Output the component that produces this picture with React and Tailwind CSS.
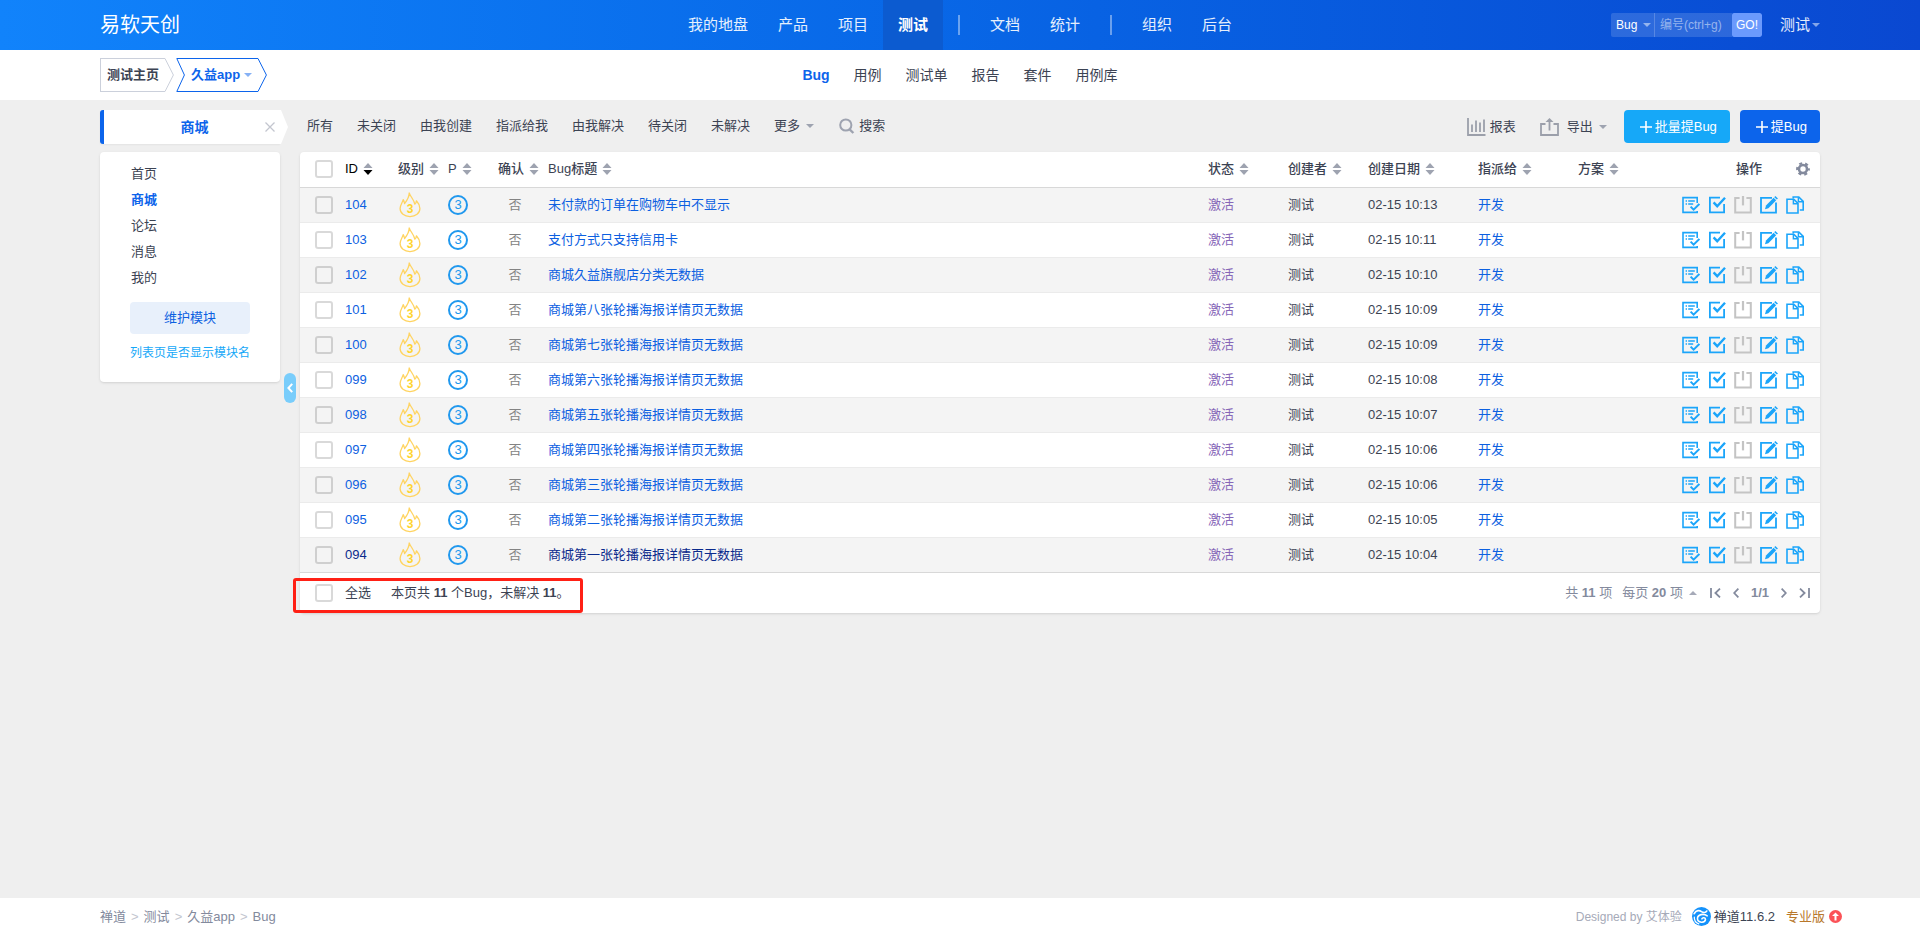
import React, { useState } from 'react';
import { clsx } from 'clsx';

const mainNav = [
  ['我的地盘', '产品', '项目', '测试'],
  ['文档', '统计'],
  ['组织', '后台'],
];

const subNav = ['Bug', '用例', '测试单', '报告', '套件', '用例库'];

const filters = ['所有', '未关闭', '由我创建', '指派给我', '由我解决', '待关闭', '未解决'];

const modules = ['首页', '商城', '论坛', '消息', '我的'];

const bugs = [
  { id: '104', title: '未付款的订单在购物车中不显示', date: '02-15 10:13' },
  { id: '103', title: '支付方式只支持信用卡', date: '02-15 10:11' },
  { id: '102', title: '商城久益旗舰店分类无数据', date: '02-15 10:10' },
  { id: '101', title: '商城第八张轮播海报详情页无数据', date: '02-15 10:09' },
  { id: '100', title: '商城第七张轮播海报详情页无数据', date: '02-15 10:09' },
  { id: '099', title: '商城第六张轮播海报详情页无数据', date: '02-15 10:08' },
  { id: '098', title: '商城第五张轮播海报详情页无数据', date: '02-15 10:07' },
  { id: '097', title: '商城第四张轮播海报详情页无数据', date: '02-15 10:06' },
  { id: '096', title: '商城第三张轮播海报详情页无数据', date: '02-15 10:06' },
  { id: '095', title: '商城第二张轮播海报详情页无数据', date: '02-15 10:05' },
  { id: '094', title: '商城第一张轮播海报详情页无数据', date: '02-15 10:04', visited: true },
];

const Caret = ({ up, className }) => (
  <svg width="8" height="4" viewBox="0 0 8 4" fill="currentColor" className={clsx('shrink-0', className)}>
    <path d={up ? 'M4 0L8 4H0z' : 'M0 0h8L4 4z'} />
  </svg>
);

const SortIcon = ({ active }) => (
  <svg width="10" height="12" viewBox="0 0 10 12" className="shrink-0">
    <path d="M5 0l4.500 5h-9z" fill="#9ea3b0" />
    <path d="M.5 7h9L5 12z" fill={active ? '#000' : '#9ea3b0'} />
  </svg>
);

const Checkbox = ({ label, ...props }) => (
  <input
    type="checkbox"
    aria-label={label}
    className="block w-[18px] h-[18px] shrink-0 appearance-none rounded-[3px] border-2 border-black/15 checked:bg-[#0c64eb]"
    {...props}
  />
);

// Severity flame
const Flame = () => (
  <svg width="22" height="26" viewBox="0 0 22 26" fill="none" stroke="#ffd461" strokeWidth="1.3" strokeLinejoin="round">
    <path d="M10.200 1C11.600 5 15 7.400 15.800 12.200C17 11.400 17.400 10.400 17.400 8.800C19.800 11.400 20.900 14 20.900 16.400C20.900 21.200 16.600 24.600 11 24.600C5.400 24.600 1.100 21.200 1.100 16.400C1.100 13 3.400 10.800 4.200 7.600C5 9 5.400 10.200 5.600 11.600C7.600 9 10.200 5.600 10.200 1Z" />
    <text x="11" y="21" textAnchor="middle" fontSize="12" fontWeight="bold" fill="#ffd42e" stroke="none" fontFamily="Liberation Sans, sans-serif">3</text>
  </svg>
);

const ConfirmIcon = () => (
  <svg width="18" height="18" viewBox="0 0 18 18" fill="none" stroke="currentColor" strokeWidth="1.6">
    <path d="M15.200 7V1.600H1v14.800h14.200v-1.400" />
    <path d="M3.600 5h1.400M6.200 5h6.600M3.600 8h1.400M6.200 8h5" strokeWidth="1.3" />
    <path d="M8.600 10.600l3 3L17.400 8" strokeWidth="2" />
  </svg>
);

const ResolveIcon = () => (
  <svg width="18" height="18" viewBox="0 0 18 18" fill="none" stroke="currentColor" strokeWidth="1.8">
    <path d="M12 1.700H1.900v14.600h14.200V8" />
    <path d="M5.600 6.400l3.600 3.800L17 1.800" strokeWidth="2.4" />
  </svg>
);

const CloseIcon = () => (
  <svg width="18" height="18" viewBox="0 0 18 18" fill="none" stroke="#c4c4c4" strokeWidth="2">
    <path d="M5.600 2H1.200v14.600h15.600V2h-4.400" />
    <path d="M9 0v9.400" strokeWidth="2.2" />
  </svg>
);

const EditIcon = () => (
  <svg width="18" height="18" viewBox="0 0 18 18" fill="none" stroke="currentColor" strokeWidth="1.8">
    <path d="M12 1.800H1v14.900h15V6.400" />
    <path d="M5 13.200l1-3.600L13.600 1.800 16.200 4.200 8.400 12.200z" fill="currentColor" stroke="none" />
    <path d="M14.800.6L17.400 3" strokeWidth="1.6" />
  </svg>
);

const CopyIcon = () => (
  <svg width="18" height="18" viewBox="0 0 18 18" fill="none" stroke="currentColor" strokeWidth="1.6">
    <path d="M1 3.200h6.800L12 7.400v9.600H1z" />
    <path d="M7.400 3.400v4.400H12" strokeWidth="1.5" />
    <path d="M7.200 2.600V1h5.600l4.400 4.400v8.600h-3.400" />
    <path d="M12.400 1.200v4.600h4.600" strokeWidth="1.5" />
  </svg>
);

const PlusIcon = () => (
  <svg width="12" height="12" viewBox="0 0 12 12" stroke="#fff" strokeWidth="1.6">
    <path d="M6 0v12M0 6h12" />
  </svg>
);

const Header = () => (
  <header className="h-[50px] px-[100px] grid grid-cols-[1fr_auto_1fr] items-center bg-linear-to-r from-[#1183fb] to-[#0a48d1] text-white">
    <h1 className="text-[20px] leading-[30px]">易软天创</h1>
    <nav className="flex items-center text-[15px]">
      {mainNav.map((group, i) => (
        <React.Fragment key={i}>
          {i > 0 && <span className="w-[2px] h-5 mx-[15px] bg-white/40" />}
          {group.map((item) => (
            <a
              key={item}
              href="#"
              className={clsx(
                'h-[50px] leading-[50px] px-[15px]',
                item === '测试' ? 'bg-[#0c5bd0] font-bold' : 'text-white/90'
              )}
            >
              {item}
            </a>
          ))}
        </React.Fragment>
      ))}
    </nav>
    <div className="flex items-center justify-end">
      <form className="flex h-6 text-xs rounded-xs overflow-hidden" onSubmit={(e) => e.preventDefault()}>
        <div className="relative w-[44px] bg-white/15 border-r border-white/20">
          <select aria-label="搜索类型" className="appearance-none w-full h-6 pl-[5px] bg-transparent text-white">
            <option>Bug</option>
          </select>
          <Caret className="absolute right-[3px] top-[10px] text-white/50 pointer-events-none" />
        </div>
        <input
          type="text"
          aria-label="编号"
          placeholder="编号(ctrl+g)"
          className="w-[77px] h-6 px-[5px] bg-white/15 placeholder:text-white/50"
        />
        <button type="submit" className="w-[30px] bg-[#6b9afd] rounded-xs">GO!</button>
      </form>
      <a href="#" className="ml-[18px] flex items-center gap-[2px] text-[15px] text-white/90">
        测试 <Caret className="text-white/50" />
      </a>
    </div>
  </header>
);

const SubHeader = () => (
  <div className="h-[50px] px-[100px] grid grid-cols-[1fr_auto_1fr] items-center bg-white">
    <div className="flex gap-[2px] font-bold leading-8">
      <a href="#" className="flex text-[#3c4353]">
        <span className="px-[6px] border border-r-0 border-[#cbd0db]">测试主页</span>
        <svg width="9" height="34" viewBox="0 0 9 34" fill="none" stroke="#cbd0db">
          <path d="M0 .5L8.400 17L0 33.500" />
        </svg>
      </a>
      <button type="button" className="flex text-[#0c64eb]">
        <svg width="9" height="34" viewBox="0 0 9 34" fill="none" stroke="#0c64eb">
          <path d="M9 .5H.8L8.400 17L.8 33.500H9" />
        </svg>
        <span className="flex items-center gap-1 px-[6px] border-y border-[#0c64eb]">
          久益app <Caret className="text-[#86b1f5]" />
        </span>
        <svg width="9" height="34" viewBox="0 0 9 34" fill="none" stroke="#0c64eb">
          <path d="M0 .5L8.400 17L0 33.500" />
        </svg>
      </button>
    </div>
    <nav className="flex text-[14px]">
      {subNav.map((item) => (
        <a key={item} href="#" className={clsx('px-3', item === 'Bug' && 'font-bold text-[#0c64eb]')}>
          {item}
        </a>
      ))}
    </nav>
  </div>
);

const Sidebar = ({ current, onSelect }) => (
  <aside className="w-[200px] shrink-0 relative">
    <div className="flex h-[34px] w-[188px]">
      <div className="flex w-[180px] items-center rounded-l-[3px] border-l-4 border-[#0c64eb] bg-white pr-[5px] shadow-xs">
        <span className="flex-1 pl-5 text-center text-[14px] font-bold text-[#0c64eb]">{current}</span>
        <button type="button" aria-label="清除" className="text-[#c3c6cf]">
          <svg width="10" height="10" viewBox="0 0 10 10" stroke="currentColor" strokeWidth="1.3">
            <path d="M.5.5l9 9M9.500.5l-9 9" />
          </svg>
        </button>
      </div>
      <svg width="8" height="34" viewBox="0 0 8 34">
        <path d="M0 0h1L8 17L1 34H0z" fill="#fff" />
      </svg>
    </div>

    <div className="mt-2 w-[180px] rounded-[4px] bg-white px-[30px] pt-[9px] pb-[18px] shadow-sm">
      <ul>
        {modules.map((m) => (
          <li key={m}>
            <a
              href="#"
              onClick={() => onSelect(m)}
              className={clsx('block pl-px leading-[26px]', m === current && 'font-bold text-[#0c64eb]')}
            >
              {m}
            </a>
          </li>
        ))}
      </ul>
      <button type="button" className="mt-[11px] w-full h-8 rounded-[4px] bg-[#e8f0fb] text-[#0c60e1]">
        维护模块
      </button>
      <a href="#" className="mt-2 block whitespace-nowrap text-xs leading-[22px] text-[#16a8f8]">
        列表页是否显示模块名
      </a>
    </div>

    {/* Collapse handle sits in the gutter */}
    <button
      type="button"
      aria-label="收起"
      className="absolute left-[184px] top-[263px] flex h-[30px] w-3 items-center justify-center rounded-full bg-[#79cdfb]"
    >
      <svg width="6" height="10" viewBox="0 0 6 10" fill="none" stroke="#fff" strokeWidth="2">
        <path d="M5.200.8L1.400 5l3.800 4.200" />
      </svg>
    </button>
  </aside>
);

const Toolbar = () => (
  <div className="flex h-[33px] items-center justify-between">
    <div className="flex -ml-[5px] items-center pb-[2px]">
      {filters.map((f) => (
        <a key={f} href="#" className="px-3">{f}</a>
      ))}
      <button type="button" className="flex items-center gap-[6px] px-3">
        更多 <Caret className="text-[#9ea3b0]" />
      </button>
      <button type="button" className="flex items-center gap-1 px-[13px]">
        <svg width="16" height="16" viewBox="0 0 16 16" fill="none" stroke="#9ea3b0" strokeWidth="2">
          <circle cx="6.800" cy="7" r="5.600" />
          <path d="M10.600 11.400l3.800 3.600" strokeWidth="2.4" />
        </svg>
        搜索
      </button>
    </div>
    <div className="flex items-center">
      <a href="#" className="flex items-center gap-1">
        <svg width="19" height="18" viewBox="0 0 19 18" fill="none" stroke="#9b9faa" strokeWidth="1.8">
          <path d="M1 0v17H18.500M5 6.500V14M9 2.500V14M13 4.500V14M17 1.500V14" />
        </svg>
        报表
      </a>
      <button type="button" className="ml-6 flex items-center">
        <svg width="19" height="18" viewBox="0 0 19 18" fill="none" stroke="#9b9faa" strokeWidth="1.8">
          <path d="M5.500 6H1v11h17V6h-4.500M9.500 12.500V2" />
          <path d="M5.500 4L9.500 0l4 4z" fill="#9b9faa" stroke="none" />
        </svg>
        <span className="ml-2 mr-[6px]">导出</span>
        <Caret className="text-[#9ea3b0]" />
      </button>
      <button type="button" className="ml-[17px] flex h-[33px] items-center gap-[3px] rounded-[4px] bg-[#16a8f8] pl-4 pr-[13px] text-white">
        <PlusIcon /> 批量提Bug
      </button>
      <button type="button" className="ml-[10px] flex h-[33px] items-center gap-[3px] rounded-[4px] bg-[#0c64eb] pl-4 pr-[13px] text-white">
        <PlusIcon /> 提Bug
      </button>
    </div>
  </div>
);

const Th = ({ children, active }) => (
  <th className="pl-2 font-medium">
    <span className={clsx('flex items-center gap-[5px]', active && 'text-black')}>
      {children} <SortIcon active={active} />
    </span>
  </th>
);

const BugTable = () => (
  <div className="mt-[9px] rounded-[4px] bg-white shadow-sm">
    <table className="w-full table-fixed border-collapse text-left whitespace-nowrap">
      <colgroup>
        <col className="w-[37px]" />
        <col className="w-[53px]" />
        <col className="w-[50px]" />
        <col className="w-[50px]" />
        <col className="w-[50px]" />
        <col />
        <col className="w-[80px]" />
        <col className="w-[80px]" />
        <col className="w-[110px]" />
        <col className="w-[100px]" />
        <col className="w-[100px]" />
        <col className="w-[150px]" />
      </colgroup>
      <thead>
        <tr className="h-[35px] border-b border-[#d8d8d8]">
          <th className="pl-[15px]"><Checkbox label="全选本页" /></th>
          <Th active>ID</Th>
          <Th>级别</Th>
          <Th>P</Th>
          <Th>确认</Th>
          <Th>Bug标题</Th>
          <Th>状态</Th>
          <Th>创建者</Th>
          <Th>创建日期</Th>
          <Th>指派给</Th>
          <Th>方案</Th>
          <th className="pr-[10px] font-medium">
            <div className="flex items-center justify-end gap-[34px]">
              操作
              <button type="button" aria-label="自定义列">
                <svg width="14" height="14" viewBox="0 0 14 14" fill="none" stroke="#838a9d">
                  <circle cx="7" cy="7" r="4" strokeWidth="2.6" />
                  <circle cx="7" cy="7" r="5.800" strokeWidth="2.2" strokeDasharray="3 3.070" strokeDashoffset="1.500" />
                </svg>
              </button>
            </div>
          </th>
        </tr>
      </thead>
      <tbody>
        {bugs.map((bug) => (
          <tr key={bug.id} className="h-[35px] border-b border-[#ebebeb] last:border-[#d8d8d8] odd:bg-[#f4f4f4]">
            <td className="pl-[15px]"><Checkbox label={`选择 ${bug.id}`} /></td>
            <td className="pl-2">
              <a href="#" className={bug.visited ? 'text-[#0a2a8c]' : 'text-[#0c60e1]'}>{bug.id}</a>
            </td>
            <td className="pl-[9px]"><Flame /></td>
            <td className="pl-2">
              <span className="flex h-5 w-5 items-center justify-center rounded-full border-2 border-[#2098ee] text-[#2098ee]">3</span>
            </td>
            <td className="text-center text-[#838383]">否</td>
            <td className="pl-2">
              <a href="#" className={bug.visited ? 'text-[#0a2a8c]' : 'text-[#0c60e1]'}>{bug.title}</a>
            </td>
            <td className="pl-2 text-[#8666b8]">激活</td>
            <td className="pl-2">测试</td>
            <td className="pl-2">{bug.date}</td>
            <td className="pl-2"><a href="#" className="text-[#0c60e1]">开发</a></td>
            <td />
            <td className="pr-4">
              <div className="flex justify-end gap-2 text-[#1ba5fa]">
                <button type="button" title="确认"><ConfirmIcon /></button>
                <button type="button" title="解决"><ResolveIcon /></button>
                <button type="button" title="关闭" disabled><CloseIcon /></button>
                <button type="button" title="编辑"><EditIcon /></button>
                <button type="button" title="复制"><CopyIcon /></button>
              </div>
            </td>
          </tr>
        ))}
      </tbody>
    </table>

    <div className="relative flex h-[40px] items-center justify-between pl-[15px] pr-[10px]">
      <div className="flex items-center">
        <label className="flex items-center gap-3">
          <Checkbox /> 全选
        </label>
        <p className="ml-5">
          本页共 <strong>11</strong> 个Bug，未解决 <strong>11</strong>。
        </p>
      </div>
      <div className="flex items-center text-[#838a9d]">
        <span>共 <strong>11</strong> 项</span>
        <button type="button" className="ml-[10px] flex items-center gap-[6px]">
          <span>每页 <strong>20</strong> 项</span>
          <Caret up className="text-[#a6aab8]" />
        </button>
        <div className="ml-[13px] flex items-center gap-3">
          <button type="button" aria-label="首页">
            <svg width="11" height="10" viewBox="0 0 11 10" fill="none" stroke="currentColor" strokeWidth="1.8">
              <path d="M1 0v10M10 .6L5.400 5l4.600 4.400" />
            </svg>
          </button>
          <button type="button" aria-label="上一页">
            <svg width="6" height="10" viewBox="0 0 6 10" fill="none" stroke="currentColor" strokeWidth="1.8">
              <path d="M5.400.6L1.200 5l4.200 4.400" />
            </svg>
          </button>
          <strong>1/1</strong>
          <button type="button" aria-label="下一页">
            <svg width="6" height="10" viewBox="0 0 6 10" fill="none" stroke="currentColor" strokeWidth="1.8">
              <path d="M.6.6L4.800 5L.6 9.400" />
            </svg>
          </button>
          <button type="button" aria-label="末页">
            <svg width="11" height="10" viewBox="0 0 11 10" fill="none" stroke="currentColor" strokeWidth="1.8">
              <path d="M10 0v10M1 .6L5.600 5L1 9.400" />
            </svg>
          </button>
        </div>
      </div>
      {/* Highlight frame round the summary */}
      <div className="pointer-events-none absolute -left-[7px] top-[5px] h-[35px] w-[290px] rounded-[3px] border-3 border-[#ff2015]" />
    </div>
  </div>
);

const Footer = () => (
  <footer className="flex h-[39px] items-center justify-between bg-white pb-[2px] pl-[100px] pr-[78px]">
    <nav className="flex gap-[5px] text-[#838a9d]">
      <a href="#">禅道</a>
      <span className="text-[#c3c6cf]">&gt;</span>
      <a href="#">测试</a>
      <span className="text-[#c3c6cf]">&gt;</span>
      <a href="#">久益app</a>
      <span className="text-[#c3c6cf]">&gt;</span>
      <span>Bug</span>
    </nav>
    <div className="flex items-center">
      <span className="text-xs text-[#a6aab8]">Designed by <a href="#">艾体验</a></span>
      <a href="#" className="ml-[10px] flex items-center gap-[3px]">
        <svg width="19" height="19" viewBox="0 0 18 18" fill="none" stroke="#fff" strokeLinecap="round">
          <circle cx="9" cy="9" r="9" fill="#1492fb" stroke="none" />
          <path d="M2 6.400C4.200 2.600 7.200 3 9 4.400C10.800 5.600 13 5.200 14 3.800" strokeWidth="1.5" />
          <path d="M14.400 8.400C11 5.800 5.200 7 5.200 11C5.200 15.200 12.400 15.600 12.800 11.800C12.800 10 10 9.600 9.400 11.200" strokeWidth="1.5" />
          <path d="M2.200 9.600C2 12.400 3.800 15 6.400 16" strokeWidth="1.2" />
        </svg>
        禅道11.6.2
      </a>
      <a href="#" className="ml-[11px] flex items-center gap-1 text-[#b8772b]">
        专业版
        <svg width="13" height="13" viewBox="0 0 13 13" fill="#fff">
          <circle cx="6.500" cy="6.500" r="6.500" fill="#fb5257" />
          <path d="M6.500 2.400L10 6H7.500v4.400h-2V6H3z" />
        </svg>
      </a>
    </div>
  </footer>
);

const App = () => {
  const [module, setModule] = useState('商城');

  return (
    <div className="flex min-h-screen flex-col bg-[#efefef] font-['Liberation_Sans','Noto_Sans_CJK_SC',sans-serif] text-[13px] leading-5 text-[#3c4353]">
      <Header />
      <SubHeader />
      <main className="flex flex-1 items-start px-[100px] pt-[10px] pb-5">
        <Sidebar current={module} onSelect={setModule} />
        <section className="min-w-0 flex-1">
          <Toolbar />
          <BugTable />
        </section>
      </main>
      <Footer />
    </div>
  );
};

export default App;
